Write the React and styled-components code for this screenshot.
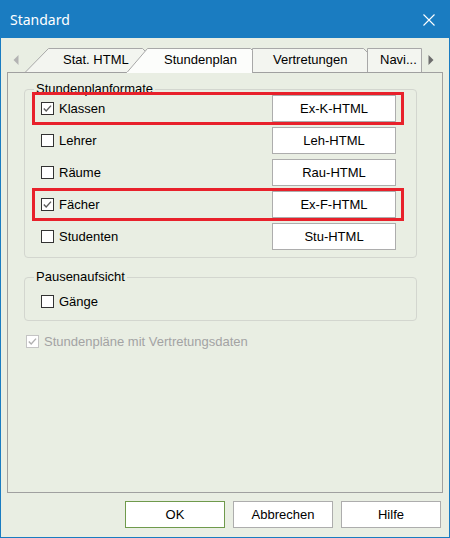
import React from "react";
import styled, { createGlobalStyle } from "styled-components";

const GlobalStyle = createGlobalStyle`
  html, body { margin: 0; padding: 0; }
  body {
    font-family: "Liberation Sans", Arial, sans-serif;
    font-size: 13px;
    color: #000;
  }
`;

const Window = styled.div`
  width: 450px;
  height: 538px;
  box-sizing: border-box;
  border: 1px solid #1a7cc1;
  background: #e9eee3;
  display: flex;
  flex-direction: column;
`;

const TitleBar = styled.div`
  height: 37px;
  flex: none;
  background: #1a7cc1;
  color: #fff;
  display: flex;
  align-items: center;
  justify-content: space-between;
  padding: 0 14px 0 9px;
  font-family: "Noto Sans", sans-serif;
  font-size: 14px;
`;

const Body = styled.div`
  flex: 1;
  display: flex;
  flex-direction: column;
  padding: 10px 6px 0;
  min-height: 0;
`;

const TabStrip = styled.div`
  position: relative;
  z-index: 1;
  height: 24px;
  flex: none;
  display: flex;
  align-items: flex-end;
`;

const Arrow = styled.div`
  width: ${(p) => p.$w}px;
  height: 24px;
  flex: none;
  display: flex;
  align-items: center;
  justify-content: ${(p) => (p.$right ? "flex-start" : "center")};
  padding-left: ${(p) => (p.$right ? 6 : 0)}px;
  box-sizing: border-box;
`;

const Tab = styled.div`
  position: relative;
  flex: none;
  width: ${(p) => p.$w}px;
  height: ${(p) => (p.$active ? 25 : 24)}px;
  margin-left: ${(p) => p.$ml || 0}px;
  margin-bottom: ${(p) => (p.$active ? -1 : 0)}px;
  z-index: ${(p) => (p.$active ? 2 : 1)};
  svg { position: absolute; inset: 0; }
`;

const TabLabel = styled.span`
  position: relative;
  display: block;
  padding-left: ${(p) => p.$pl}px;
  line-height: 16px;
  padding-top: 4px;
  white-space: nowrap;
`;

const Panel = styled.div`
  flex: 1;
  border: 1px solid #a0a0a0;
  display: flex;
  flex-direction: column;
`;

const Group = styled.div`
  display: flex;
  flex-direction: column;
  border: 1px solid #d3d6cf;
  border-radius: 4px;
  margin: ${(p) => p.$mt}px 25px 0 16px;
  padding: 0 20px ${(p) => p.$pb}px 16px;
`;

const Legend = styled.div`
  align-self: flex-start;
  margin: -9px 0 0 -7px;
  padding: 0 2px;
  line-height: 15px;
  background: #e9eee3;
`;

const Rows = styled.div`
  display: flex;
  flex-direction: column;
  gap: 5px;
  margin-top: ${(p) => p.$mt}px;
  padding-left: ${(p) => p.$pl || 0}px;
`;

const Row = styled.div`
  position: relative;
  height: ${(p) => p.$h || 27}px;
  display: flex;
  align-items: center;
  justify-content: space-between;
`;

const Highlight = styled.div`
  position: absolute;
  top: -3px;
  bottom: -3px;
  left: -9px;
  right: -8px;
  border: 3px solid #e8212b;
  pointer-events: none;
`;

const CheckLabel = styled.label`
  display: flex;
  align-items: center;
  gap: 5px;
  color: ${(p) => (p.$disabled ? "#a3a3a3" : "#000")};
`;

const Box = styled.span`
  width: 13px;
  height: 13px;
  box-sizing: border-box;
  border: 1px solid ${(p) => (p.$disabled ? "#c4c4c4" : "#333")};
  background: #fff;
  display: flex;
  align-items: center;
  justify-content: center;
`;

const FieldButton = styled.div`
  width: 124px;
  height: 27px;
  box-sizing: border-box;
  border: 1px solid #adadad;
  background: #fff;
  display: flex;
  align-items: center;
  justify-content: center;
`;

const Footer = styled.div`
  flex: none;
  display: flex;
  justify-content: flex-end;
  gap: 8px;
  padding: 8px 2px 9px 0;
`;

const DialogButton = styled.div`
  width: 100px;
  height: 27px;
  box-sizing: border-box;
  border: 1px solid ${(p) => (p.$default ? "#6f9a4c" : "#adadad")};
  background: #fff;
  display: flex;
  align-items: center;
  justify-content: center;
`;

const Check = ({ disabled }) => (
  <svg width="11" height="11" viewBox="0 0 11 11">
    <path
      d="M1.8 5.4 L4.2 7.9 L9 2.6"
      fill="none"
      stroke={disabled ? "#b0b0b0" : "#5c5c5c"}
      strokeWidth="1.4"
    />
  </svg>
);

const Checkbox = ({ label, checked, disabled }) => (
  <CheckLabel $disabled={disabled}>
    <Box $disabled={disabled}>{checked && <Check disabled={disabled} />}</Box>
    {label}
  </CheckLabel>
);

const formats = [
  { label: "Klassen", checked: true, mark: true, button: "Ex-K-HTML" },
  { label: "Lehrer", button: "Leh-HTML" },
  { label: "Räume", button: "Rau-HTML" },
  { label: "Fächer", checked: true, mark: true, button: "Ex-F-HTML" },
  { label: "Studenten", button: "Stu-HTML" },
];

const tabs = [
  { label: "Stat. HTML", w: 122, pl: 38, d: "M0.5 24 L23.5 0.5 L117.5 0.5 L121.5 4.5 L121.5 24", fill: "#f3f5f0" },
  { label: "Stundenplan", w: 127, ml: -21, pl: 38, active: true, d: "M0.5 25 L21.5 0.5 L124.5 0.5 L126.5 2.5 L126.5 25", fill: "#fcfdfb" },
  { label: "Vertretungen", w: 116, ml: -1, pl: 21, d: "M0.5 24 L0.5 0.5 L111.5 0.5 L115.5 4.5 L115.5 24", fill: "#f3f5f0" },
  { label: "Navi...", w: 55, ml: -1, pl: 13, d: "M0.5 24 L0.5 0.5 L54.5 0.5 L54.5 24", fill: "#f3f5f0" },
];

export default function App() {
  return (
    <>
      <GlobalStyle />
      <Window>
        <TitleBar>
          <span>Standard</span>
          <svg width="12" height="12" viewBox="0 0 12 12">
            <path d="M0.5 0.5 L11.5 11.5 M11.5 0.5 L0.5 11.5" stroke="#fff" strokeWidth="1.1" />
          </svg>
        </TitleBar>
        <Body>
          <TabStrip>
            <Arrow $w={18}>
              <svg width="6" height="10" viewBox="0 0 6 10">
                <path d="M5.5 0 L0.5 5 L5.5 10 Z" fill="#b3b3b3" />
              </svg>
            </Arrow>
            {tabs.map((t) => (
              <Tab key={t.label} $w={t.w} $ml={t.ml} $active={t.active}>
                <svg width={t.w} height={t.active ? 25 : 24}>
                  <path d={t.d} fill={t.fill} stroke="#a8a8a8" strokeWidth="1" />
                  {t.active && <rect x="1" y="24" width={t.w - 2} height="1" fill={t.fill} />}
                </svg>
                <TabLabel $pl={t.pl}>{t.label}</TabLabel>
              </Tab>
            ))}
            <Arrow $w={21} $right>
              <svg width="6" height="10" viewBox="0 0 6 10">
                <path d="M0.5 0 L5.5 5 L0.5 10 Z" fill="#6d6d6d" />
              </svg>
            </Arrow>
          </TabStrip>
          <Panel>
            <Group $mt={16} $pb={7}>
              <Legend>Stundenplanformate</Legend>
              <Rows $mt={-1}>
                {formats.map((f) => (
                  <Row key={f.label}>
                    <Checkbox label={f.label} checked={f.checked} />
                    <FieldButton>{f.button}</FieldButton>
                    {f.mark && <Highlight />}
                  </Row>
                ))}
              </Rows>
            </Group>
            <Group $mt={19} $pb={9}>
              <Legend>Pausenaufsicht</Legend>
              <Rows $mt={7}>
                <Row $h={20}>
                  <Checkbox label="Gänge" />
                </Row>
              </Rows>
            </Group>
            <Rows $mt={10} $pl={18}>
              <Row $h={20}>
                <Checkbox label="Stundenpläne mit Vertretungsdaten" checked disabled />
              </Row>
            </Rows>
          </Panel>
          <Footer>
            <DialogButton $default>OK</DialogButton>
            <DialogButton>Abbrechen</DialogButton>
            <DialogButton>Hilfe</DialogButton>
          </Footer>
        </Body>
      </Window>
    </>
  );
}
